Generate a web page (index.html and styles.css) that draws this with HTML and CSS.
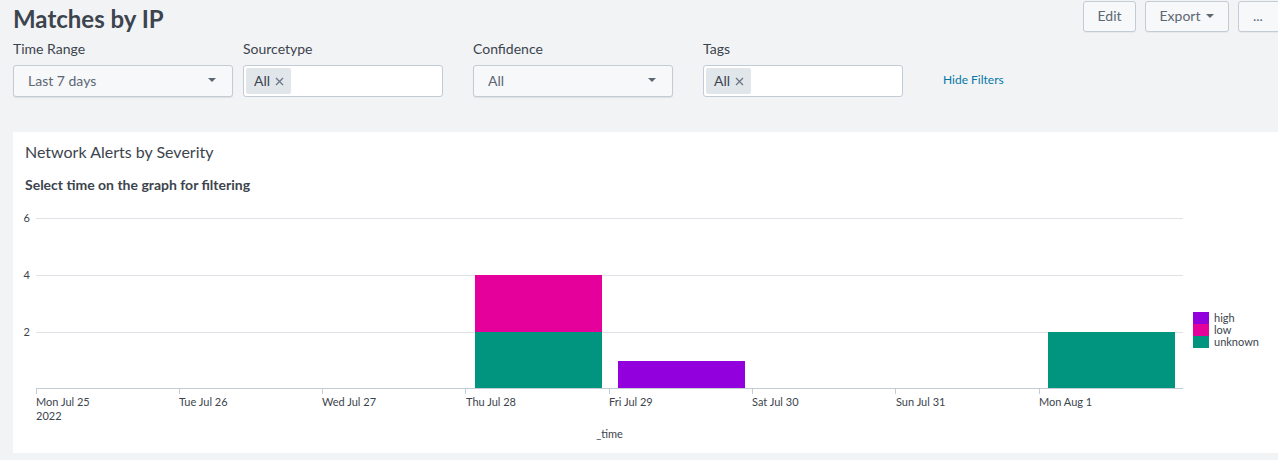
FILE: index.html
```html
<!DOCTYPE html>
<html lang="en">
<head>
<meta charset="utf-8">
<title>Matches by IP</title>
<link rel="stylesheet" href="styles.css">
</head>
<body>
<div class="page">
  <header class="top">
    <h1 class="title">Matches by IP</h1>
    <div class="actions">
      <button class="btn btn-edit">Edit</button>
      <button class="btn btn-export">Export <span class="caret"></span></button>
      <button class="btn btn-more">...</button>
    </div>
  </header>

  <div class="filters">
    <div class="field field-wide">
      <div class="label">Time Range</div>
      <div class="select">Last 7 days<span class="caret"></span></div>
    </div>
    <div class="field">
      <div class="label">Sourcetype</div>
      <div class="multi"><span class="chip">All <svg class="x" width="9" height="9" viewBox="0 0 9 9"><path d="M1 1L8 8M8 1L1 8"/></svg></span></div>
    </div>
    <div class="field">
      <div class="label">Confidence</div>
      <div class="select">All<span class="caret"></span></div>
    </div>
    <div class="field">
      <div class="label">Tags</div>
      <div class="multi"><span class="chip">All <svg class="x" width="9" height="9" viewBox="0 0 9 9"><path d="M1 1L8 8M8 1L1 8"/></svg></span></div>
    </div>
    <a class="hide-filters">Hide Filters</a>
  </div>

  <section class="panel">
    <h2 class="panel-title">Network Alerts by Severity</h2>
    <h3 class="panel-sub">Select time on the graph for filtering</h3>
    <div class="chart-row">
      <svg class="chart" width="1180" height="260" viewBox="0 0 1180 260">
        <g class="grid">
          <line x1="23" y1="25.5" x2="1170" y2="25.5"/>
          <line x1="23" y1="82.5" x2="1170" y2="82.5"/>
          <line x1="23" y1="139.5" x2="1170" y2="139.5"/>
        </g>
        <g class="ylab">
          <text x="17" y="29">6</text>
          <text x="17" y="86">4</text>
          <text x="17" y="143">2</text>
        </g>
        <g class="bars">
          <rect x="462" y="139" width="127" height="57" fill="#01947f"/>
          <rect x="462" y="82" width="127" height="57" fill="#e6009b"/>
          <rect x="605" y="168" width="127" height="28" fill="#9100dd"/>
          <rect x="1035" y="139" width="127" height="57" fill="#01947f"/>
        </g>
        <g class="axis">
          <line x1="23" y1="195.5" x2="1170" y2="195.5"/>
          <line x1="23.5" y1="195" x2="23.5" y2="201"/>
          <line x1="166.5" y1="195" x2="166.5" y2="201"/>
          <line x1="309.5" y1="195" x2="309.5" y2="201"/>
          <line x1="452.5" y1="195" x2="452.5" y2="201"/>
          <line x1="596.5" y1="195" x2="596.5" y2="201"/>
          <line x1="739.5" y1="195" x2="739.5" y2="201"/>
          <line x1="882.5" y1="195" x2="882.5" y2="201"/>
          <line x1="1026.5" y1="195" x2="1026.5" y2="201"/>
        </g>
        <g class="xlab">
          <text x="23" y="213">Mon Jul 25</text>
          <text x="23" y="227">2022</text>
          <text x="166" y="213">Tue Jul 26</text>
          <text x="309" y="213">Wed Jul 27</text>
          <text x="453" y="213">Thu Jul 28</text>
          <text x="596" y="213">Fri Jul 29</text>
          <text x="739" y="213">Sat Jul 30</text>
          <text x="883" y="213">Sun Jul 31</text>
          <text x="1026" y="213">Mon Aug 1</text>
          <text class="xtitle" x="596.5" y="245">_time</text>
        </g>
      </svg>
      <ul class="legend">
        <li><span class="sw sw-high"></span>high</li>
        <li><span class="sw sw-low"></span>low</li>
        <li><span class="sw sw-unknown"></span>unknown</li>
      </ul>
    </div>
  </section>
</div>
</body>
</html>
```

FILE: styles.css
```css
* { box-sizing: border-box; }

html, body {
  margin: 0;
  padding: 0;
  background: #f2f3f5;
  overflow: hidden;
}

body {
  font-family: Lato, "Open Sans", "Liberation Sans", sans-serif;
  color: #3c444d;
}

.page {
  width: 1292px;
  padding-left: 13px;
}

.top {
  display: flex;
  justify-content: space-between;
  align-items: flex-start;
  height: 33px;
}

.title {
  margin: 0;
  padding-top: 3px;
  font-size: 24px;
  line-height: 32px;
  font-weight: 700;
  color: #3c444d;
}

.actions {
  display: flex;
  gap: 9px;
  padding-top: 1px;
}

.btn {
  height: 31px;
  border: 1px solid #c3cbd4;
  border-radius: 3px;
  background: #f7f8fa;
  color: #5c6773;
  font-family: inherit;
  font-size: 14px;
  padding: 0 14px 2px;
  display: flex;
  align-items: center;
  box-shadow: 0 1px 0 rgba(0,0,0,0.04);
}

.btn-edit { width: 53px; justify-content: center; }
.btn-export { width: 84px; justify-content: center; gap: 6px; }
.btn-more { width: 54px; justify-content: flex-start; padding-left: 14px; }

.caret {
  display: inline-block;
  width: 0;
  height: 0;
  border-left: 4px solid transparent;
  border-right: 4px solid transparent;
  border-top: 4px solid #5c6773;
}

.filters {
  display: flex;
  align-items: flex-start;
  margin-top: 8px;
}

.field {
  width: 200px;
  margin-right: 30px;
}

.field-wide {
  width: 220px;
  margin-right: 10px;
}

.label {
  font-size: 14px;
  line-height: 16px;
  margin-bottom: 8px;
  color: #3c444d;
}

.select {
  height: 32px;
  border: 1px solid #c3cbd4;
  border-radius: 3px;
  background: #f7f8fa;
  box-shadow: 0 1px 1px rgba(0,0,0,0.08);
  display: flex;
  align-items: center;
  justify-content: space-between;
  padding: 0 16px 2px 14px;
  font-size: 14px;
  color: #5c6773;
}

.multi {
  height: 32px;
  border: 1px solid #c3cbd4;
  border-radius: 3px;
  background: #ffffff;
  display: flex;
  align-items: center;
  padding: 0 2px;
}

.chip {
  height: 26px;
  display: inline-flex;
  align-items: center;
  gap: 5px;
  padding: 0 7px 1px 8px;
  background: #e1e6eb;
  border-radius: 2px;
  font-size: 14px;
  color: #3c444d;
}

.chip .x {
  display: block;
  margin-top: 1px;
}

.chip .x path {
  stroke: #6b7785;
  stroke-width: 1.3;
  fill: none;
}

.hide-filters {
  margin-left: 10px;
  margin-top: 31px;
  line-height: 16px;
  font-size: 12px;
  color: #0877a6;
  cursor: pointer;
}

.panel {
  margin-top: 35px;
  background: #ffffff;
  height: 321px;
  padding: 10px 0 0 0;
}

.panel-title {
  margin: 0 0 0 12px;
  font-size: 16px;
  line-height: 20px;
  font-weight: 400;
  color: #3c444d;
}

.panel-sub {
  margin: 15px 0 0 12px;
  font-size: 14px;
  line-height: 16px;
  font-weight: 700;
  color: #3c444d;
}

.chart-row {
  display: flex;
  align-items: flex-start;
}

.chart {
  display: block;
  flex: none;
}

.grid line {
  stroke: #dfe3e8;
  stroke-width: 1;
}

.axis line {
  stroke: #c3cbd4;
  stroke-width: 1;
}

.ylab text {
  font-size: 11px;
  fill: #3c444d;
  text-anchor: end;
}

.xlab text {
  font-size: 11px;
  fill: #3c444d;
}

.xlab .xtitle {
  text-anchor: middle;
}

.legend {
  list-style: none;
  margin: 119px 0 0 0;
  padding: 0;
}

.legend li {
  display: flex;
  align-items: center;
  gap: 5px;
  height: 12px;
  font-size: 11px;
  line-height: 12px;
  color: #3c444d;
}

.sw {
  display: inline-block;
  width: 16px;
  height: 12px;
}

.sw-high { background: #9100dd; }
.sw-low { background: #e6009b; }
.sw-unknown { background: #01947f; }
```
